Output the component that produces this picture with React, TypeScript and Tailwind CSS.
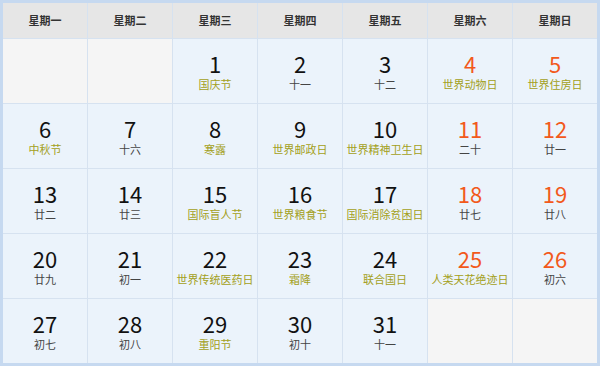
const weekdays = ['星期一', '星期二', '星期三', '星期四', '星期五', '星期六', '星期日']

type Day = {
  n?: number
  sub?: string
  fest?: boolean
  red?: boolean
}

const days: Day[] = [
  {},
  {},
  { n: 1, sub: '国庆节', fest: true },
  { n: 2, sub: '十一' },
  { n: 3, sub: '十二' },
  { n: 4, sub: '世界动物日', fest: true, red: true },
  { n: 5, sub: '世界住房日', fest: true, red: true },
  { n: 6, sub: '中秋节', fest: true },
  { n: 7, sub: '十六' },
  { n: 8, sub: '寒露', fest: true },
  { n: 9, sub: '世界邮政日', fest: true },
  { n: 10, sub: '世界精神卫生日', fest: true },
  { n: 11, sub: '二十', red: true },
  { n: 12, sub: '廿一', red: true },
  { n: 13, sub: '廿二' },
  { n: 14, sub: '廿三' },
  { n: 15, sub: '国际盲人节', fest: true },
  { n: 16, sub: '世界粮食节', fest: true },
  { n: 17, sub: '国际消除贫困日', fest: true },
  { n: 18, sub: '廿七', red: true },
  { n: 19, sub: '廿八', red: true },
  { n: 20, sub: '廿九' },
  { n: 21, sub: '初一' },
  { n: 22, sub: '世界传统医药日', fest: true },
  { n: 23, sub: '霜降', fest: true },
  { n: 24, sub: '联合国日', fest: true },
  { n: 25, sub: '人类天花绝迹日', fest: true, red: true },
  { n: 26, sub: '初六', red: true },
  { n: 27, sub: '初七' },
  { n: 28, sub: '初八' },
  { n: 29, sub: '重阳节', fest: true },
  { n: 30, sub: '初十' },
  { n: 31, sub: '十一' },
  {},
  {},
]

export default function App() {
  return (
    <div className="h-[366px] w-[600px] bg-[#c6d9f0] p-[3px] font-['Noto_Sans_CJK_SC',sans-serif]">
      <div className="grid h-full grid-cols-7 grid-rows-[35px_repeat(5,1fr)] gap-px bg-[#d6e2f0]">
        {weekdays.map((w) => (
          <div
            key={w}
            className="flex items-center justify-center bg-[#e6e6e6] text-[11px] font-bold text-[#333]"
          >
            {w}
          </div>
        ))}
        {days.map((d, i) =>
          d.n ? (
            <div
              key={i}
              className="flex flex-col items-center bg-[#ebf3fb] pt-[13px]"
            >
              <div
                className={`text-[22px] leading-[22px] ${
                  d.red ? 'text-[#f2591b]' : 'text-[#111]'
                }`}
              >
                {d.n}
              </div>
              <div
                className={`mt-[4px] text-[11px] leading-[13px] ${
                  d.fest ? 'text-[#a3a020]' : 'text-[#444]'
                }`}
              >
                {d.sub}
              </div>
            </div>
          ) : (
            <div key={i} className="bg-[#f5f5f5]" />
          )
        )}
      </div>
    </div>
  )
}
